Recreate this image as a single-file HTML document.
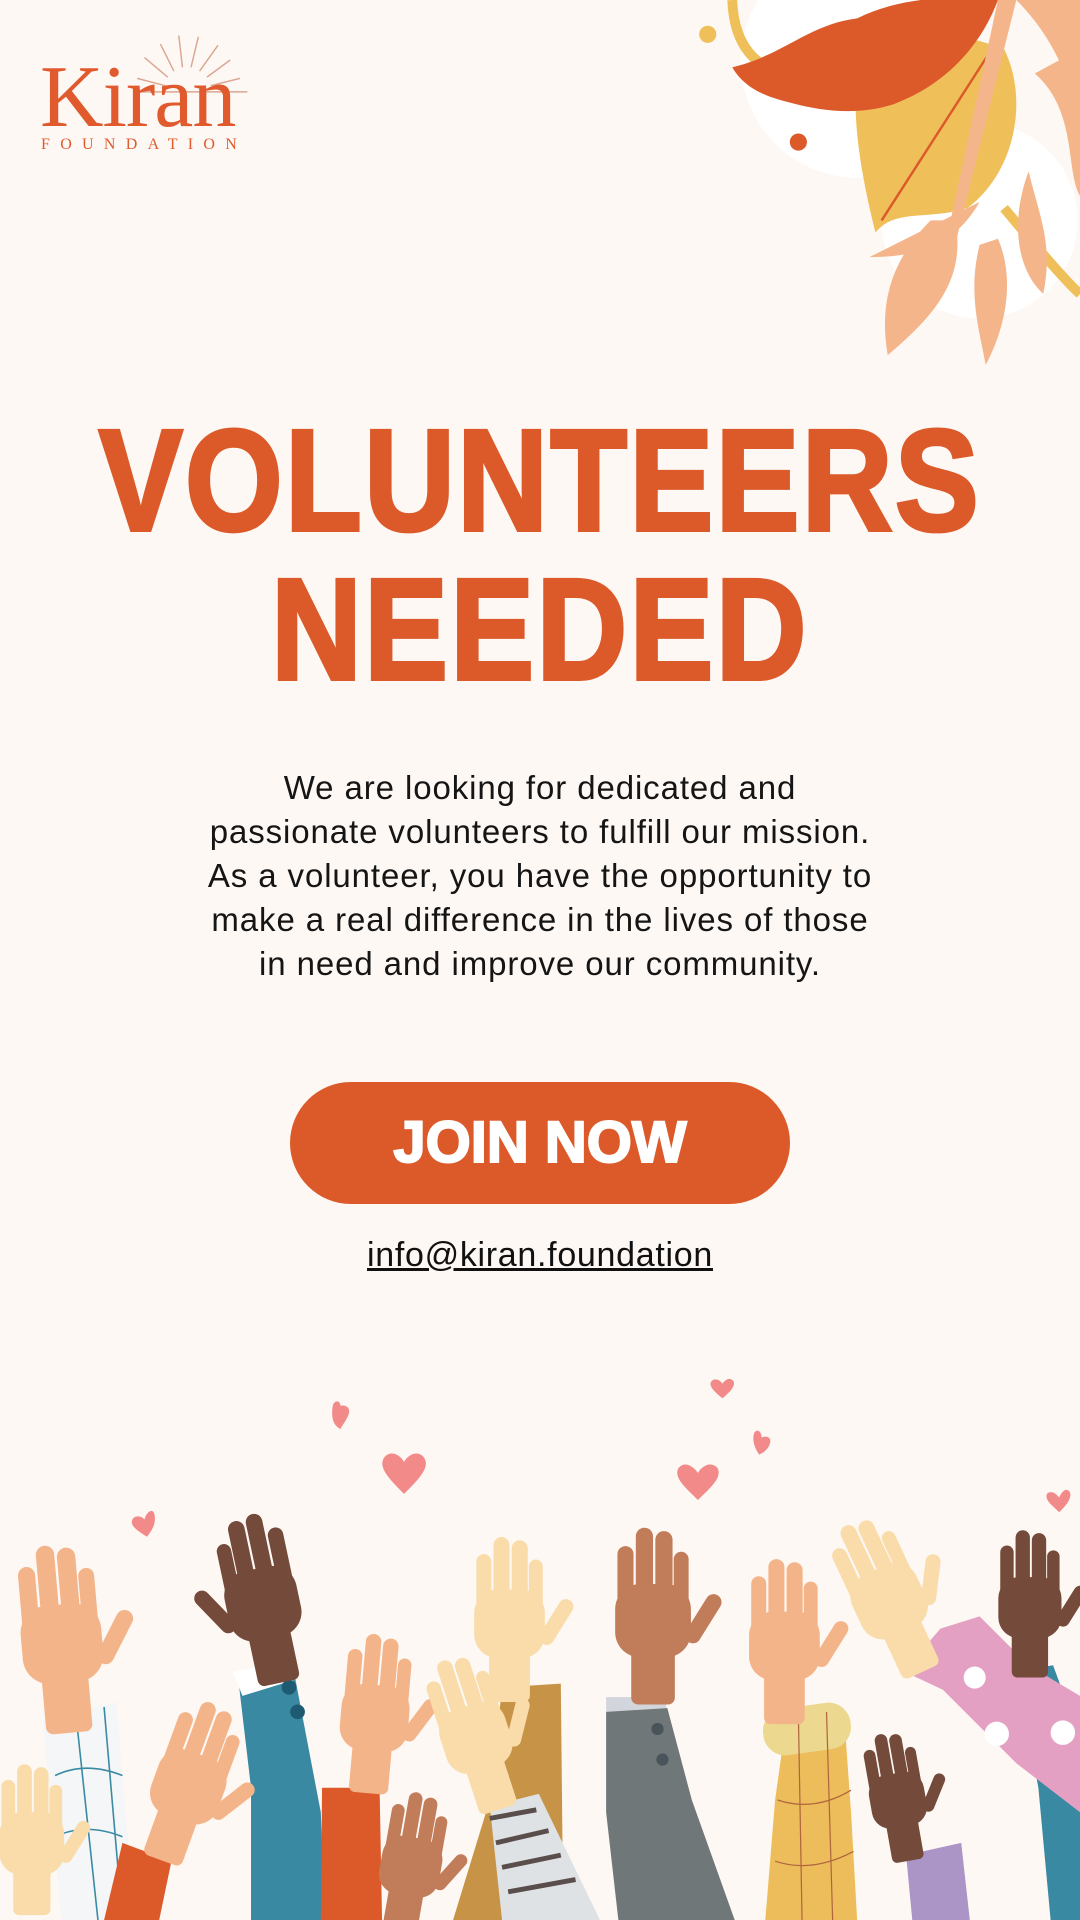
<!DOCTYPE html>
<html><head><meta charset="utf-8"><style>
html,body{margin:0;padding:0}
body{width:1080px;height:1920px;background:#fef8f4;position:relative;overflow:hidden;font-family:"Liberation Sans",sans-serif}
.abs{position:absolute}
#art{position:absolute;left:0;top:0;width:1080px;height:1920px}
.title{left:0;width:1080px;text-align:center;color:#dc5a2a;font-weight:900;font-size:144px;line-height:150px;letter-spacing:3px}
.title span{display:inline-block;transform:scaleX(0.87);-webkit-text-stroke:4px #dc5a2a}
.para{left:90px;width:900px;top:766px;text-align:center;font-size:33px;line-height:44px;color:#151515;letter-spacing:0.9px}
.btn{left:290px;top:1082px;width:500px;height:122px;border-radius:61px;background:#dc5a2a;color:#fff;text-align:center;font-weight:900;font-size:58px;line-height:122px;-webkit-text-stroke:2px #fff}
.mail{left:0;width:1080px;top:1236px;text-align:center;font-size:34px;color:#111;text-decoration:underline;letter-spacing:0.7px}
</style></head><body>
<svg id="art" viewBox="0 0 882 1568" preserveAspectRatio="none">
<defs>
<symbol id="hand" viewBox="0 0 100 160" overflow="visible">
<rect x="12" y="55" width="66" height="64" rx="22"/>
<rect x="14" y="22" width="14" height="60" rx="7"/>
<rect x="30" y="6" width="15" height="72" rx="7.5"/>
<rect x="47" y="9" width="15" height="70" rx="7.5"/>
<rect x="63" y="27" width="13" height="56" rx="6.5"/>
<rect x="70" y="58" width="14" height="48" rx="7" transform="rotate(32 77 104)"/>
<rect x="26" y="105" width="38" height="55" rx="6"/>
</symbol>
</defs>
<circle cx="700" cy="50" r="95" fill="#fff"/>
<path d="M598 0 Q600 50 640 60" stroke="#efbf5a" stroke-width="8" fill="none"/>
<circle cx="578" cy="28" r="7" fill="#efbf5a"/>
<circle cx="652" cy="116" r="7" fill="#dc5a2a"/>
<circle cx="800" cy="180" r="80" fill="#fff"/>
<path d="M820 170 Q870 230 882 240" stroke="#efbf5a" stroke-width="8" fill="none"/>
<path d="M830 0 C870 40 882 90 882 120 L882 0Z" fill="#f5b58a"/>
<path d="M845 60 C880 90 870 140 882 160 L882 40Z" fill="#f5b58a"/>
<path d="M760 180 C720 220 720 260 725 290 C760 260 790 230 780 180Z" fill="#f5b58a"/>
<path d="M800 200 C790 240 800 270 805 298 C820 270 830 230 815 195Z" fill="#f5b58a"/>
<path d="M710 210 C750 190 780 175 800 165 C780 200 750 210 710 210Z" fill="#f5b58a"/>
<path d="M840 140 C850 180 860 200 852 240 C830 220 825 180 840 140Z" fill="#f5b58a"/>
<path d="M700 60 C720 30 770 20 820 40 C840 80 830 140 790 170 C760 180 730 170 715 190 C705 150 695 100 700 60Z" fill="#efbf5a"/>
<path d="M720 180 L810 40" stroke="#dc5a2a" stroke-width="2" fill="none"/>
<path d="M598 55 C640 45 660 20 700 15 C730 0 770 -5 815 0 C800 40 770 70 730 85 C700 95 670 90 650 85 C630 80 610 75 598 55Z" fill="#dc5a2a"/>
<path d="M815 0 L830 0 L780 200 L772 200Z" fill="#f5b58a"/>
<g stroke="#dba692" stroke-width="1.2">
<line x1="135" y1="70" x2="112" y2="64"/><line x1="137" y1="63" x2="118" y2="47"/><line x1="142" y1="58" x2="131" y2="36"/>
<line x1="149" y1="55" x2="146" y2="29"/><line x1="156" y1="55" x2="162" y2="30"/><line x1="163" y1="58" x2="178" y2="37"/>
<line x1="169" y1="63" x2="188" y2="49"/><line x1="172" y1="70" x2="196" y2="64"/><line x1="109" y1="75" x2="202" y2="75"/>
</g>
<g fill="#f28a8a">
<path d="M275 1168 c-6 -3 -8 -10 -6 -20 c2 -4 6 -3 6 1 c5 -1 8 2 7 6 c-1 4 -4 8 -7 13z" transform="translate(3 -1)"/>
<path d="M330 1220 c-12 -12 -22 -22 -16 -30 c5 -6 13 -2 16 4 c3 -6 11 -10 16 -4 c6 8 -4 18 -16 30z"/>
<path d="M120 1255 c-8 -5 -14 -9 -12 -14 c2 -4 8 -3 10 0 c1 -5 6 -10 8 -5 c2 8 -2 14 -6 19z"/>
<path d="M590 1142 c-6 -5 -12 -10 -9 -14 c3 -3 7 -1 9 2 c2 -3 6 -6 9 -2 c2 4 -3 9 -9 14z"/>
<path d="M620 1188 c-4 -6 -6 -12 -4 -18 c3 -4 6 0 6 4 c4 -2 8 0 7 4 c-1 5 -5 8 -9 10z"/>
<path d="M570 1225 c-10 -10 -20 -18 -16 -26 c5 -6 12 -2 16 4 c3 -6 11 -10 16 -4 c4 8 -6 16 -16 26z"/>
<path d="M865 1235 c-6 -6 -12 -10 -10 -15 c3 -3 7 -1 10 3 c2 -5 6 -9 9 -4 c1 6 -4 11 -9 16z"/>
</g>
<polygon points="35,1405 95,1390 110,1568 50,1568" fill="#f4f6f7"/>
<g stroke="#3a8aa3" stroke-width="1.3" fill="none"><line x1="62" y1="1400" x2="80" y2="1568"/><line x1="85" y1="1394" x2="100" y2="1568"/><path d="M45 1450 q25 -12 55 0"/><path d="M45 1500 q25 -12 55 0"/></g>
<polygon points="195,1375 240,1365 262,1480 265,1568 205,1568 205,1460" fill="#3a89a3"/>
<polygon points="190,1365 235,1358 240,1372 198,1385" fill="#fff"/>
<circle cx="236" cy="1378" r="6" fill="#1e5a72"/><circle cx="243" cy="1398" r="6" fill="#1e5a72"/>
<polygon points="410,1378 458,1375 460,1568 370,1568 400,1470" fill="#c79346"/>
<polygon points="495,1386 543,1386 545,1400 495,1400" fill="#d2d6dc"/>
<polygon points="495,1398 545,1395 565,1470 600,1568 505,1568 495,1480" fill="#6f7778"/>
<circle cx="537" cy="1412" r="5" fill="#48545a"/><circle cx="541" cy="1437" r="5" fill="#48545a"/>
<polygon points="640,1420 690,1410 695,1480 700,1568 625,1568 633,1470" fill="#edbd5b"/>
<rect x="623" y="1393" width="72" height="38" rx="18" fill="#ecd88e" transform="rotate(-8 659 1412)"/>
<g stroke="#b0653f" stroke-width="1" fill="none"><line x1="652" y1="1400" x2="655" y2="1568"/><line x1="675" y1="1398" x2="680" y2="1568"/><path d="M635 1470 q30 10 60 -8"/><path d="M633 1520 q30 10 64 -8"/></g>
<polygon points="830,1365 860,1360 882,1420 882,1568 858,1568 848,1460" fill="#3a89a3"/>
<polygon points="768,1330 800,1320 840,1360 882,1385 882,1480 830,1440 770,1380 738,1365" fill="#e4a0c3"/>
<circle cx="796" cy="1370" r="9" fill="#fff"/><circle cx="814" cy="1416" r="10" fill="#fff"/><circle cx="868" cy="1415" r="10" fill="#fff"/>
<use href="#hand" x="0" y="1255" width="110" height="160" fill="#f4b48a" transform="rotate(-5 55 1335)"/>
<use href="#hand" x="158" y="1232" width="100" height="145" fill="#744a3a" transform="rotate(-12 208 1300) scale(-1 1) translate(-416 0)"/>
<use href="#hand" x="373" y="1250" width="95" height="140" fill="#f9dcaa"/>
<use href="#hand" x="488" y="1242" width="100" height="150" fill="#c17c5a"/>
<use href="#hand" x="595" y="1268" width="100" height="140" fill="#f4b48a"/>
<use href="#hand" x="680" y="1230" width="95" height="140" fill="#f9dcaa" transform="rotate(-25 728 1300)"/>
<use href="#hand" x="800" y="1245" width="90" height="125" fill="#744a3a"/>
<polygon points="263,1460 310,1460 312,1568 262,1568" fill="#dc5a2a"/>
<use href="#hand" x="268" y="1330" width="85" height="135" fill="#f4b48a" transform="rotate(5 310 1400)"/>
<polygon points="400,1475 440,1465 490,1568 410,1568" fill="#dfe2e5"/>
<g stroke="#5a4e4c" stroke-width="4"><line x1="400" y1="1485" x2="438" y2="1478"/><line x1="405" y1="1505" x2="448" y2="1495"/><line x1="410" y1="1525" x2="458" y2="1515"/><line x1="415" y1="1545" x2="470" y2="1535"/></g>
<use href="#hand" x="345" y="1345" width="90" height="135" fill="#f9dcaa" transform="rotate(-18 390 1410)"/>
<use href="#hand" x="300" y="1460" width="80" height="120" fill="#c17c5a" transform="rotate(10 340 1520)"/>
<polygon points="740,1515 785,1505 792,1568 745,1568" fill="#ab95c6"/>
<use href="#hand" x="700" y="1410" width="70" height="110" fill="#744a3a" transform="rotate(-10 735 1460)"/>
<polygon points="100,1505 140,1520 130,1568 85,1568" fill="#dc5a2a"/>
<use href="#hand" x="110" y="1385" width="100" height="140" fill="#f4b48a" transform="rotate(20 160 1455)"/>
<use href="#hand" x="-10" y="1425" width="80" height="150" fill="#f9dcaa"/>
</svg>
<div class="abs" style="left:40px;top:54px;font-family:'Liberation Serif',serif;font-size:88px;color:#e05a2e;line-height:88px;letter-spacing:-1px">Kiran</div>
<div class="abs" style="left:41px;top:136px;font-family:'Liberation Serif',serif;font-size:16px;color:#e05a2e;letter-spacing:10.3px">FOUNDATION</div>
<div class="abs title" style="top:406px"><span>VOLUNTEERS</span></div>
<div class="abs title" style="top:555px"><span>NEEDED</span></div>
<div class="abs para">We are looking for dedicated and<br>passionate volunteers to fulfill our mission.<br>As a volunteer, you have the opportunity to<br>make a real difference in the lives of those<br>in need and improve our community.</div>
<div class="abs btn">JOIN NOW</div>
<div class="abs mail">info@kiran.foundation</div>
</body></html>
